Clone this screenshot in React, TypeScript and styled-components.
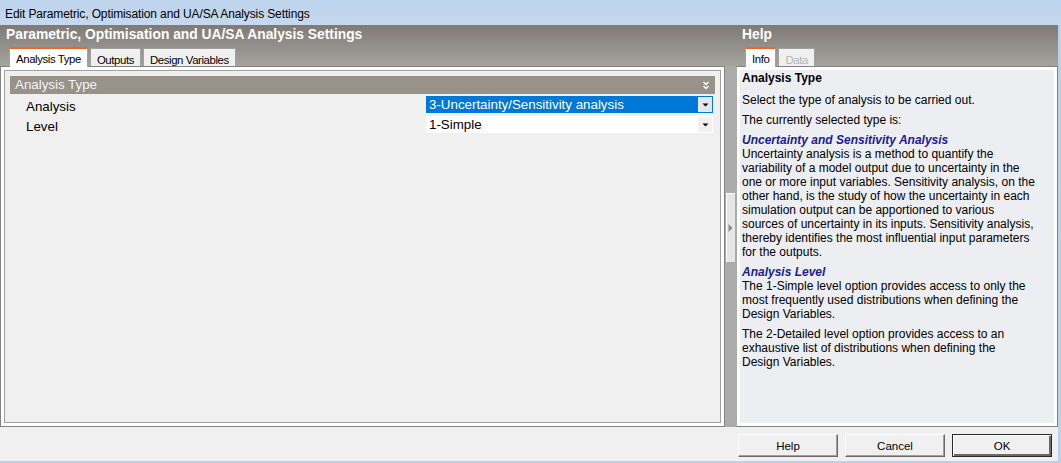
import React from "react";
import styled, { createGlobalStyle, css } from "styled-components";

const GlobalStyle = createGlobalStyle`
  html, body {
    margin: 0;
    padding: 0;
    background: #f0f0f0;
  }
  body {
    font-family: "Liberation Sans", Arial, sans-serif;
    color: #000;
  }
  * { box-sizing: border-box; }
`;

const Window = styled.div`
  width: 1061px;
  height: 463px;
  display: flex;
  flex-direction: column;
  overflow: hidden;
  background: #f0f0f0;
`;

const TitleBar = styled.div`
  height: 25px;
  flex: none;
  padding: 3px 0 0 5px;
  line-height: 22px;
  font-size: 12px;
  letter-spacing: -0.12px;
  background: linear-gradient(#bcd3ec, #c6d9ee);
  white-space: nowrap;
`;

const Main = styled.div`
  flex: 1;
  display: flex;
  flex-direction: column;
  border-right: 3px solid #bad1ea;
  border-bottom: 2px solid #bad1ea;
`;

const Body = styled.div`
  height: 402px;
  display: grid;
  grid-template-columns: 725px 11px 1fr;
  grid-template-rows: 41px 1fr;
  background: linear-gradient(#7f7a75 0, #a6a39f 41px, #ababab 41px);
`;

const PaneHeader = styled.div`
  display: flex;
  flex-direction: column;
`;

const PaneTitle = styled.div`
  height: 22px;
  padding-left: 6px;
  line-height: 20px;
  font-size: 13.8px;
  font-weight: bold;
  color: #ffffff;
  white-space: nowrap;
`;

const TabStrip = styled.div`
  height: 19px;
  display: flex;
  align-items: flex-end;
  gap: 2px;
  padding-left: 9px;
`;

const Tab = styled.div<{ $active?: boolean; $disabled?: boolean }>`
  height: 18px;
  padding: 3px 6px 0 6px;
  line-height: 16px;
  font-size: 11.4px;
  letter-spacing: -0.4px;
  white-space: nowrap;
  background: #f0f0f0;
  border: 1px solid #a0a0a0;
  border-bottom: none;
  color: ${(p) => (p.$disabled ? "#b4b4b4" : "#000")};
  ${(p) =>
    p.$active &&
    css`
      position: relative;
      z-index: 1;
      height: 20px;
      margin-bottom: -1px;
      padding-top: 2px;
      background: #ffffff;
      border-top: 2px solid #f0642a;
    `}
`;

const LeftFrame = styled.div`
  border: 1px solid #828282;
  background: #ffffff;
  padding: 3px;
`;

const InnerBox = styled.div`
  height: 100%;
  border: 1px solid #a0a0a0;
  background: #f0f0f0;
  padding: 5px;
`;

const SectionBar = styled.div`
  height: 18px;
  display: flex;
  align-items: center;
  justify-content: space-between;
  padding: 0 5px;
  background: #98928a;
  color: #f4f4f4;
  font-size: 13.33px;
  line-height: 18px;
  margin-bottom: 1px;
`;

const Row = styled.div`
  height: 20px;
  display: grid;
  grid-template-columns: 1fr 287px;
  padding: 0 2px 0 16px;
`;

const RowLabel = styled.div`
  padding-top: 3px;
  line-height: 18px;
  font-size: 13.33px;
`;

const Combo = styled.div<{ $focused?: boolean }>`
  margin-top: 1px;
  height: 17px;
  display: flex;
  border: 1px solid ${(p) => (p.$focused ? "#0078d7" : "transparent")};
  background: #ffffff;
`;

const ComboValue = styled.div<{ $focused?: boolean }>`
  flex: 1;
  padding-left: 2px;
  line-height: 15px;
  font-size: 13.33px;
  white-space: nowrap;
  background: ${(p) => (p.$focused ? "#0078d7" : "#ffffff")};
  color: ${(p) => (p.$focused ? "#ffffff" : "#000")};
`;

const ComboButton = styled.div<{ $focused?: boolean }>`
  width: 15px;
  display: flex;
  align-items: center;
  justify-content: center;
  background: ${(p) => (p.$focused ? "#e3e8ee" : "#f0f0f0")};
  border-left: 1px solid ${(p) => (p.$focused ? "#0078d7" : "#ffffff")};
`;

const Splitter = styled.div`
  background: #ababab;
  padding-top: 127px;
`;

const SplitterGrip = styled.div`
  margin-left: 1px;
  width: 9px;
  height: 69px;
  background: #e6e6e6;
  border-left: 1px solid #ffffff;
  border-top: 1px solid #ffffff;
  display: flex;
  align-items: center;
  justify-content: center;
  padding-right: 1px;
`;

const HelpFrame = styled.div`
  border: 1px solid #828282;
  border-left-color: #ababab;
  background: #ffffff;
  padding: 3px;
`;

const HelpBody = styled.div`
  height: 100%;
  background: #eceef2;
  padding: 1px 2px;
  font-size: 12px;
  line-height: 14px;
  white-space: nowrap;
`;

const HelpTitle = styled.div`
  font-weight: bold;
  margin-bottom: 8px;
`;

const HelpPara = styled.div<{ $gap?: number }>`
  margin-bottom: ${(p) => p.$gap ?? 6}px;
`;

const TopicHeading = styled.div`
  font-weight: bold;
  font-style: italic;
  color: #1c1c94;
  line-height: 13px;
`;

const Footer = styled.div`
  flex: 1;
  display: flex;
  justify-content: flex-end;
  gap: 7px;
  padding: 7px 6px 0 0;
`;

const Button = styled.button<{ $default?: boolean }>`
  width: 100px;
  height: 23px;
  padding: 0;
  font-family: "Liberation Sans", Arial, sans-serif;
  font-size: 11.5px;
  color: #000;
  background: #f0f0f0;
  border: 1px solid;
  border-color: #ffffff #696969 #696969 #ffffff;
  box-shadow: inset -1px -1px 0 #a0a0a0;
  ${(p) =>
    p.$default &&
    css`
      border: 1px solid #2b2b2b;
      box-shadow: inset 1px 1px 0 #ffffff, inset -2px -2px 0 #696969;
    `}
`;

const Arrow = () => (
  <svg width="7" height="4" viewBox="0 0 7 4">
    <path d="M0.5 0.5 H6.5 L3.5 3.5 Z" fill="#000" />
  </svg>
);

const DoubleChevron = () => (
  <svg width="8" height="9" viewBox="0 0 8 9">
    <polyline points="1.5,1 4,3.5 6.5,1" fill="none" stroke="#fff" strokeWidth="1.4" />
    <polyline points="1.5,5 4,7.5 6.5,5" fill="none" stroke="#fff" strokeWidth="1.4" />
  </svg>
);

const GripArrow = () => (
  <svg width="5" height="8" viewBox="0 0 5 8">
    <path d="M0.5 0 L4.5 4 L0.5 8 Z" fill="#8a8a8a" />
  </svg>
);

const rows = [
  { label: "Analysis", value: "3-Uncertainty/Sensitivity analysis", focused: true },
  { label: "Level", value: "1-Simple", focused: false },
];

const App = () => {
  return (
    <Window>
      <GlobalStyle />
      <TitleBar>Edit Parametric, Optimisation and UA/SA Analysis Settings</TitleBar>
      <Main>
        <Body>
          <PaneHeader>
            <PaneTitle>Parametric, Optimisation and UA/SA Analysis Settings</PaneTitle>
            <TabStrip>
              <Tab $active>Analysis Type</Tab>
              <Tab>Outputs</Tab>
              <Tab>Design Variables</Tab>
            </TabStrip>
          </PaneHeader>
          <div />
          <PaneHeader>
            <PaneTitle>Help</PaneTitle>
            <TabStrip>
              <Tab $active>Info</Tab>
              <Tab $disabled>Data</Tab>
            </TabStrip>
          </PaneHeader>

          <LeftFrame>
            <InnerBox>
              <SectionBar>
                <span>Analysis Type</span>
                <DoubleChevron />
              </SectionBar>
              {rows.map((r) => (
                <Row key={r.label}>
                  <RowLabel>{r.label}</RowLabel>
                  <Combo $focused={r.focused}>
                    <ComboValue $focused={r.focused}>{r.value}</ComboValue>
                    <ComboButton $focused={r.focused}>
                      <Arrow />
                    </ComboButton>
                  </Combo>
                </Row>
              ))}
            </InnerBox>
          </LeftFrame>

          <Splitter>
            <SplitterGrip>
              <GripArrow />
            </SplitterGrip>
          </Splitter>

          <HelpFrame>
            <HelpBody>
              <HelpTitle>Analysis Type</HelpTitle>
              <HelpPara>Select the type of analysis to be carried out.</HelpPara>
              <HelpPara $gap={7}>The currently selected type is:</HelpPara>
              <HelpPara $gap={7}>
                <TopicHeading>Uncertainty and Sensitivity Analysis</TopicHeading>
                Uncertainty analysis is a method to quantify the
                <br />
                variability of a model output due to uncertainty in the
                <br />
                one or more input variables. Sensitivity analysis, on the
                <br />
                other hand, is the study of how the uncertainty in each
                <br />
                simulation output can be apportioned to various
                <br />
                sources of uncertainty in its inputs. Sensitivity analysis,
                <br />
                thereby identifies the most influential input parameters
                <br />
                for the outputs.
              </HelpPara>
              <HelpPara>
                <TopicHeading>Analysis Level</TopicHeading>
                The 1-Simple level option provides access to only the
                <br />
                most frequently used distributions when defining the
                <br />
                Design Variables.
              </HelpPara>
              <HelpPara>
                The 2-Detailed level option provides access to an
                <br />
                exhaustive list of distributions when defining the
                <br />
                Design Variables.
              </HelpPara>
            </HelpBody>
          </HelpFrame>
        </Body>
        <Footer>
          <Button>Help</Button>
          <Button>Cancel</Button>
          <Button $default>OK</Button>
        </Footer>
      </Main>
    </Window>
  );
};

export default App;
